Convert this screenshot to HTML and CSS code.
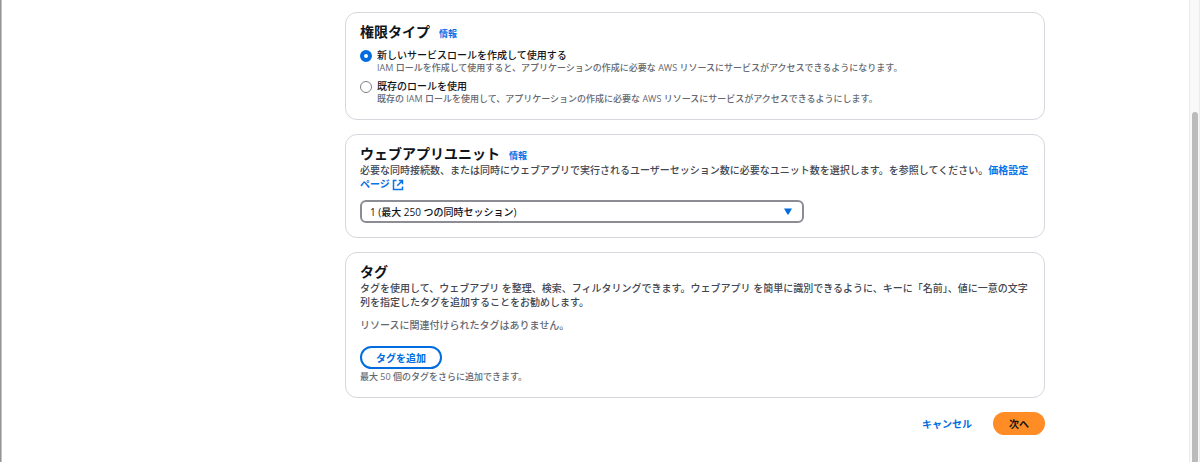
FILE: index.html
```
<!DOCTYPE html>
<html lang="ja">
<head>
<meta charset="utf-8">
<meta name="viewport" content="width=device-width, initial-scale=1">
<title>ウェブアプリの作成</title>
<link rel="stylesheet" href="styles.css">
</head>
<body>
<div class="shell">
  <div class="edge"></div>
  <main class="page">
    <form class="form">
      <section class="card">
        <header class="card-header">
          <h2 class="card-title">権限タイプ</h2>
          <a class="info" href="#">情報</a>
        </header>
        <div class="options">
          <div class="option">
            <input class="radio" type="radio" name="role" id="role-new" aria-describedby="role-new-hint" checked>
            <div>
              <label class="option-label" for="role-new">新しいサービスロールを作成して使用する</label>
              <p class="hint" id="role-new-hint">IAM ロールを作成して使用すると、アプリケーションの作成に必要な AWS リソースにサービスがアクセスできるようになります。</p>
            </div>
          </div>
          <div class="option">
            <input class="radio" type="radio" name="role" id="role-existing" aria-describedby="role-existing-hint">
            <div>
              <label class="option-label" for="role-existing">既存のロールを使用</label>
              <p class="hint" id="role-existing-hint">既存の IAM ロールを使用して、アプリケーションの作成に必要な AWS リソースにサービスがアクセスできるようにします。</p>
            </div>
          </div>
        </div>
      </section>

      <section class="card">
        <header class="card-header">
          <h2 class="card-title" id="units-title">ウェブアプリユニット</h2>
          <a class="info" href="#">情報</a>
        </header>
        <p class="description">必要な同時接続数、または同時にウェブアプリで実行されるユーザーセッション数に必要なユニット数を選択します。を参照してください。<a class="link" href="#">価格設定ページ <svg class="external" viewBox="0 0 16 16" aria-hidden="true"><path d="M6 2H2v12h12v-4M9 2h5v5M14 2L7 9"/></svg></a></p>
        <div class="select-box">
          <select class="select" aria-labelledby="units-title">
            <option>1 (最大 250 つの同時セッション)</option>
          </select>
          <svg class="caret" viewBox="0 0 8 7" aria-hidden="true"><path d="M0 0.500h8L4.500 6.500h-1z"/></svg>
        </div>
      </section>

      <section class="card">
        <header class="card-header">
          <h2 class="card-title">タグ</h2>
        </header>
        <p class="description">タグを使用して、ウェブアプリ を整理、検索、フィルタリングできます。ウェブアプリ を簡単に識別できるように、キーに「名前」、値に一意の文字列を指定したタグを追加することをお勧めします。</p>
        <p class="empty">リソースに関連付けられたタグはありません。</p>
        <button class="button button-outline" type="button">タグを追加</button>
        <p class="hint tag-limit">最大 50 個のタグをさらに追加できます。</p>
      </section>

      <footer class="actions">
        <button class="button button-link" type="button">キャンセル</button>
        <button class="button button-primary" type="submit">次へ</button>
      </footer>
    </form>
  </main>
  <div class="scroll-track"><div class="scroll-thumb"></div></div>
</div>
</body>
</html>
```
FILE: styles.css
```
* {
  box-sizing: border-box;
}

body {
  margin: 0;
  background: #fff;
  color: #424650;
  font-family: "Open Sans", "Noto Sans CJK JP", sans-serif;
  font-size: 10px;
  font-weight: 500;
  line-height: 14px;
}

h2,
p {
  margin: 0;
}

.shell {
  display: flex;
  min-height: 100vh;
}

.edge {
  flex: none;
  width: 2px;
  border-right: 1px solid #c4c2c4;
  background: #949494;
}

.page {
  flex: 1;
  display: grid;
  grid-template-columns: 343fr 700fr 144fr;
  padding-top: 12px;
}

.form {
  grid-column: 2;
  display: flex;
  flex-direction: column;
  gap: 14px;
}

.card {
  padding: 10px 12px 14px 14px;
  border: 1px solid #d5d7dc;
  border-radius: 12px;
}

.card-header {
  display: flex;
  align-items: baseline;
  gap: 9px;
}

.card-title {
  color: #0f141a;
  font-size: 14px;
  font-weight: 700;
  line-height: 18px;
}

.info {
  color: #0972e8;
  font-size: 9px;
  font-weight: 700;
  line-height: 14px;
  text-decoration: none;
}

.options {
  display: flex;
  flex-direction: column;
  gap: 5px;
  padding-top: 7px;
}

.option {
  display: flex;
  align-items: flex-start;
  gap: 5px;
}

.radio {
  appearance: none;
  flex: none;
  width: 12px;
  height: 12px;
  margin: 2px 0 0;
  border: 1px solid #7d818b;
  border-radius: 50%;
  background: #fff;
}

.radio:checked {
  border: 4px solid #006ce0;
}

.option-label {
  display: block;
  color: #0f141a;
}

.hint {
  color: #656871;
  font-size: 9px;
  line-height: 12px;
}

.link {
  color: #0972e8;
  font-weight: 700;
  text-decoration: none;
}

.external {
  width: 12px;
  height: 12px;
  fill: none;
  stroke: currentColor;
  stroke-width: 2;
  vertical-align: -3px;
}

.select-box {
  position: relative;
  width: 66%;
  margin-top: 9px;
}

.select {
  appearance: none;
  display: block;
  width: 100%;
  height: 23px;
  padding: 0 24px 0 8px;
  border: 2px solid #8c8c94;
  border-radius: 6px;
  background: #fff;
  color: #0f141a;
  font: inherit;
}

.caret {
  position: absolute;
  top: 8px;
  right: 12px;
  width: 8px;
  height: 7px;
  fill: #006ce0;
  pointer-events: none;
}

.empty {
  margin: 9px 0 14px;
  color: #656871;
}

.button {
  height: 23px;
  padding: 0 16px;
  border: 0;
  border-radius: 12px;
  background: none;
  font: inherit;
  font-weight: 700;
}

.button-outline {
  padding: 0 14px;
  border: 2px solid #006ce0;
  color: #006ce0;
}

.tag-limit {
  margin-top: 2px;
}

.actions {
  display: flex;
  justify-content: flex-end;
  gap: 5px;
}

.button-link {
  color: #006ce0;
}

.button-primary {
  background: #ff8c24;
  color: #0f141a;
}

.scroll-track {
  flex: none;
  width: 11px;
  padding: 112px 2px 0;
  border: solid #ececec;
  border-width: 0 1px;
  background: #f9f9f9;
}

.scroll-thumb {
  width: 6px;
  height: 100%;
  border-radius: 3px 3px 0 0;
  background: #bbb;
}
```
